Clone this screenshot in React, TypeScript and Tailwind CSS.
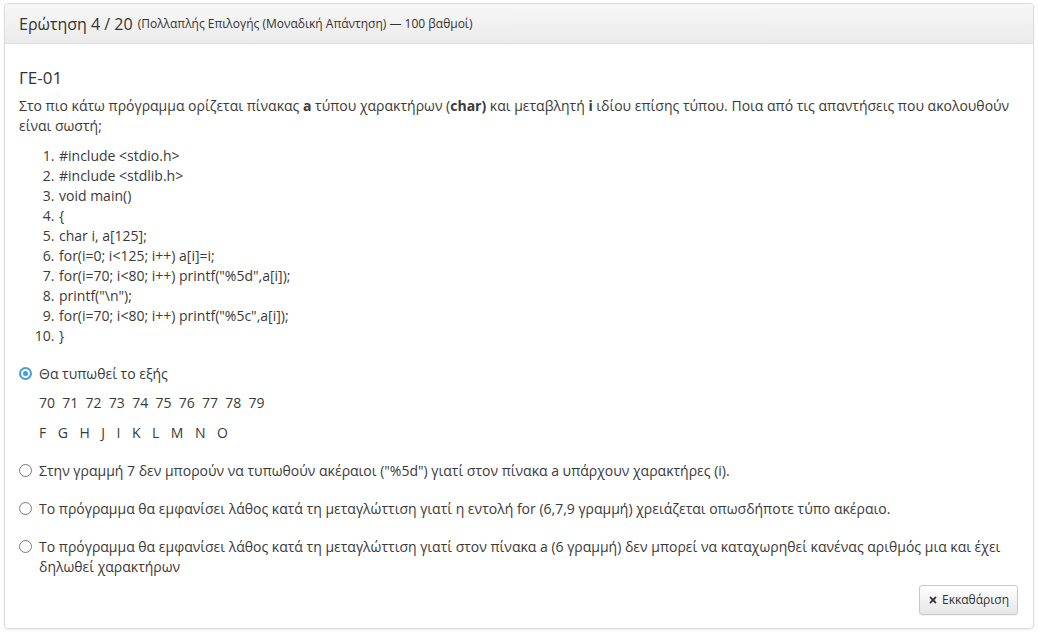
import {FaTimes} from "react-icons/fa";

const codeLines = [
    "#include <stdio.h>",
    "#include <stdlib.h>",
    "void main()",
    "{",
    "char i, a[125];",
    "for(i=0; i<125; i++) a[i]=i;",
    "for(i=70; i<80; i++) printf(\"%5d\",a[i]);",
    "printf(\"\\n\");",
    "for(i=70; i<80; i++) printf(\"%5c\",a[i]);",
    "}",
];

const numbers = ["70", "71", "72", "73", "74", "75", "76", "77", "78", "79"];
const letters = ["F", "G", "H", "J", "I", "K", "L", "M", "N", "O"];

const Radio = ({checked}: { checked?: boolean }) => (
    checked ? (
        <span className="mt-[3px] flex h-[13px] w-[13px] shrink-0 items-center justify-center rounded-full border-[2px] border-[#3f9ee4] bg-white">
            <span className="h-[5px] w-[5px] rounded-full bg-[#3f9ee4]"/>
        </span>
    ) : (
        <span className="mt-[3px] h-[13px] w-[13px] shrink-0 rounded-full border-[1.5px] border-[#7a7a7a] bg-white"/>
    )
);

const Option = ({text, checked, children}: { text: string, checked?: boolean, children?: React.ReactNode }) => (
    <div className="flex items-start gap-[7px]">
        <Radio checked={checked}/>
        <div>
            <div>{text}</div>
            {children}
        </div>
    </div>
);

export default function App() {
    return (
        <div className="min-h-[637px] bg-white px-[4px] pt-[3px] pb-[6px] text-[14px] leading-[20px] text-[#3a3a3a]"
             style={{fontFamily: "'Open Sans', 'DejaVu Sans', sans-serif"}}>
            <div className="overflow-hidden rounded-[4px] border border-[#dcdcdc] shadow-[0_1px_2px_rgba(0,0,0,0.08)]">
                <div className="flex h-[40px] items-center border-b border-[#dcdcdc] bg-gradient-to-b from-[#f7f7f7] to-[#ebebeb] px-[14px]">
                    <span className="text-[16px] text-[#333]">Ερώτηση 4 / 20</span>
                    <span className="ml-[5px] text-[12px] text-[#333]">(Πολλαπλής Επιλογής (Μοναδική Απάντηση) — 100 βαθμοί)</span>
                </div>

                <div className="px-[14px] pt-[24px] pb-[13px]">
                    <h4 className="mb-[8px] text-[17px] leading-[20px] text-[#333]">ΓΕ-01</h4>
                    <p className="mb-[10px]">
                        Στο πιο κάτω πρόγραμμα ορίζεται πίνακας <b>a</b> τύπου χαρακτήρων (<b>char)</b> και μεταβλητή <b>i</b> ιδίου
                        επίσης τύπου. Ποια από τις απαντήσεις που ακολουθούν είναι σωστή;
                    </p>
                    <ol className="mb-[18px] list-decimal pl-[39px]">
                        {codeLines.map((line, i) => (
                            <li key={i} className="pl-[1px]">{line}</li>
                        ))}
                    </ol>

                    <div className="flex flex-col gap-[18px]">
                        <Option text="Θα τυπωθεί το εξής" checked={true}>
                            <div className="mt-[9px] whitespace-pre">{numbers.join("\u00a0\u00a0")}</div>
                            <div className="mt-[10px] flex gap-[11.5px]">
                                {letters.map((l) => <span key={l}>{l}</span>)}
                            </div>
                        </Option>
                        <Option text={"Στην γραμμή 7 δεν μπορούν να τυπωθούν ακέραιοι (\"%5d\") γιατί στον πίνακα a υπάρχουν χαρακτήρες (i)."}/>
                        <Option text="Το πρόγραμμα θα εμφανίσει λάθος κατά τη μεταγλώττιση γιατί η εντολή for (6,7,9 γραμμή) χρειάζεται οπωσδήποτε τύπο ακέραιο."/>
                        <Option text="Το πρόγραμμα θα εμφανίσει λάθος κατά τη μεταγλώττιση γιατί στον πίνακα a (6 γραμμή) δεν μπορεί να καταχωρηθεί κανένας αριθμός μια και έχει δηλωθεί χαρακτήρων"/>
                    </div>

                    <div className="mt-[8px] flex justify-end">
                        <button className="mr-[1px] flex h-[30px] items-center gap-[4px] rounded-[3px] border border-[#c8c8c8] bg-gradient-to-b from-white to-[#e6e6e6] px-[8px] text-[12px] text-[#333] shadow-[0_1px_1px_rgba(0,0,0,0.05)]">
                            <FaTimes className="h-[10px] w-[10px]"/>
                            Εκκαθάριση
                        </button>
                    </div>
                </div>
            </div>
        </div>
    );
}
